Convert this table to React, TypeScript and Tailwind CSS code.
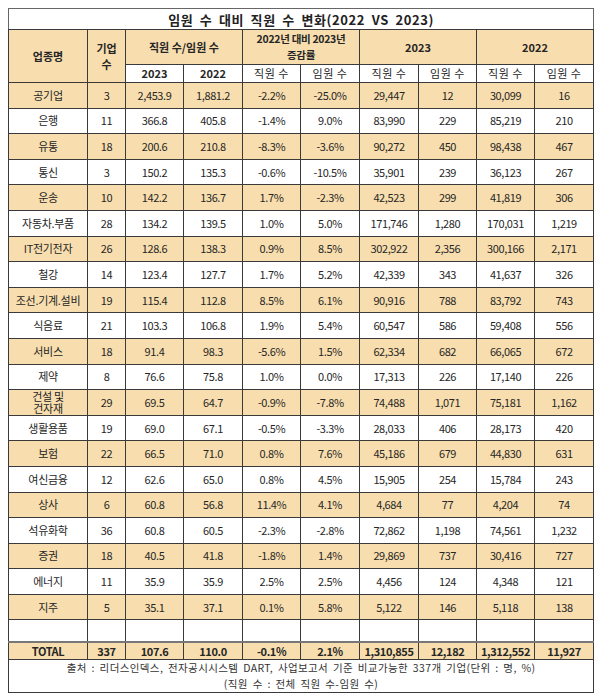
type Row = [string, string, string, string, string, string, string, string, string, string];

const rows: Row[] = [
  ["공기업", "3", "2,453.9", "1,881.2", "-2.2%", "-25.0%", "29,447", "12", "30,099", "16"],
  ["은행", "11", "366.8", "405.8", "-1.4%", "9.0%", "83,990", "229", "85,219", "210"],
  ["유통", "18", "200.6", "210.8", "-8.3%", "-3.6%", "90,272", "450", "98,438", "467"],
  ["통신", "3", "150.2", "135.3", "-0.6%", "-10.5%", "35,901", "239", "36,123", "267"],
  ["운송", "10", "142.2", "136.7", "1.7%", "-2.3%", "42,523", "299", "41,819", "306"],
  ["자동차.부품", "28", "134.2", "139.5", "1.0%", "5.0%", "171,746", "1,280", "170,031", "1,219"],
  ["IT전기전자", "26", "128.6", "138.3", "0.9%", "8.5%", "302,922", "2,356", "300,166", "2,171"],
  ["철강", "14", "123.4", "127.7", "1.7%", "5.2%", "42,339", "343", "41,637", "326"],
  ["조선.기계.설비", "19", "115.4", "112.8", "8.5%", "6.1%", "90,916", "788", "83,792", "743"],
  ["식음료", "21", "103.3", "106.8", "1.9%", "5.4%", "60,547", "586", "59,408", "556"],
  ["서비스", "18", "91.4", "98.3", "-5.6%", "1.5%", "62,334", "682", "66,065", "672"],
  ["제약", "8", "76.6", "75.8", "1.0%", "0.0%", "17,313", "226", "17,140", "226"],
  ["건설 및 건자재", "29", "69.5", "64.7", "-0.9%", "-7.8%", "74,488", "1,071", "75,181", "1,162"],
  ["생활용품", "19", "69.0", "67.1", "-0.5%", "-3.3%", "28,033", "406", "28,173", "420"],
  ["보험", "22", "66.5", "71.0", "0.8%", "7.6%", "45,186", "679", "44,830", "631"],
  ["여신금융", "12", "62.6", "65.0", "0.8%", "4.5%", "15,905", "254", "15,784", "243"],
  ["상사", "6", "60.8", "56.8", "11.4%", "4.1%", "4,684", "77", "4,204", "74"],
  ["석유화학", "36", "60.8", "60.5", "-2.3%", "-2.8%", "72,862", "1,198", "74,561", "1,232"],
  ["증권", "18", "40.5", "41.8", "-1.8%", "1.4%", "29,869", "737", "30,416", "727"],
  ["에너지", "11", "35.9", "35.9", "2.5%", "2.5%", "4,456", "124", "4,348", "121"],
  ["지주", "5", "35.1", "37.1", "0.1%", "5.8%", "5,122", "146", "5,118", "138"],
];

const total: Row = ["TOTAL", "337", "107.6", "110.0", "-0.1%", "2.1%", "1,310,855", "12,182", "1,312,552", "11,927"];

const widths = [79, 38, 58, 59, 58, 59, 59, 58, 58, 59];

const cell = "border border-[#3a3a3a] text-center align-middle p-0";

export default function App() {
  return (
    <div
      className="w-[600px] h-[698px] bg-white pt-[8px] pl-[8px] text-[#262626]"
      style={{ fontFamily: '"Noto Sans CJK KR", "Noto Sans", sans-serif' }}
    >
      <table className="table-fixed border-collapse w-[585px] text-[11px] leading-[13px]">
        <colgroup>
          {widths.map((w, i) => (
            <col key={i} style={{ width: w }} />
          ))}
        </colgroup>
        <tbody>
          <tr className="h-[21px]">
            <td colSpan={10} className="border border-[#666] border-b-[#3a3a3a] text-center font-bold text-[13px] tracking-[0.6px] [word-spacing:3px] text-[#222]">
              임원 수 대비 직원 수 변화(2022 VS 2023)
            </td>
          </tr>
          <tr className="h-[35px] bg-[#f8deae] font-bold">
            <td rowSpan={2} className={cell}>업종명</td>
            <td rowSpan={2} className={`${cell} leading-[16px]`}>기업<br />수</td>
            <td colSpan={2} className={cell}>직원 수/임원 수</td>
            <td colSpan={2} className={`${cell} text-[10.5px] leading-[16px] tracking-[-0.3px]`}>
              2022년 대비 2023년<br />증감률
            </td>
            <td colSpan={2} className={cell}>2023</td>
            <td colSpan={2} className={cell}>2022</td>
          </tr>
          <tr className="h-[18px] bg-white">
            <td className={`${cell} font-bold`}>2023</td>
            <td className={`${cell} font-bold`}>2022</td>
            {["직원 수", "임원 수", "직원 수", "임원 수", "직원 수", "임원 수"].map((t, i) => (
              <td key={i} className={`${cell} tracking-[0.5px]`}>{t}</td>
            ))}
          </tr>
          {rows.map((r, i) => (
            <tr key={r[0]} className={`h-[25.6px] ${i % 2 === 0 ? "bg-[#f8deae]" : "bg-white"}`}>
              {r.map((v, j) => (
                <td
                  key={j}
                  className={`${cell} ${j === 0 ? "tracking-[-0.3px]" : "tracking-[-0.4px]"} ${
                    r[0] === "건설 및 건자재" && j === 0 ? "leading-[12px]" : ""
                  }`}
                >
                  {r[0] === "건설 및 건자재" && j === 0 ? (
                    <>건설 및<br />건자재</>
                  ) : (
                    v
                  )}
                </td>
              ))}
            </tr>
          ))}
          <tr className="h-[22px] bg-white">
            {widths.map((_, j) => (
              <td key={j} className={cell} />
            ))}
          </tr>
          <tr className="h-[18px] bg-[#f8deae] font-bold">
            {total.map((v, j) => (
              <td key={j} className={`${cell} border-t-2 border-t-[#777] tracking-[-0.4px]`}>{v}</td>
            ))}
          </tr>
          <tr className="h-[32px] bg-white">
            <td colSpan={10} className="border border-[#3a3a3a] text-center text-[10.5px] leading-[16px] tracking-[0.4px] [word-spacing:2px] text-[#333]">
              출처 : 리더스인덱스, 전자공시시스템 DART, 사업보고서 기준 비교가능한 337개 기업(단위 : 명, %)
              <br />
              (직원 수 : 전체 직원 수-임원 수)
            </td>
          </tr>
        </tbody>
      </table>
    </div>
  );
}
